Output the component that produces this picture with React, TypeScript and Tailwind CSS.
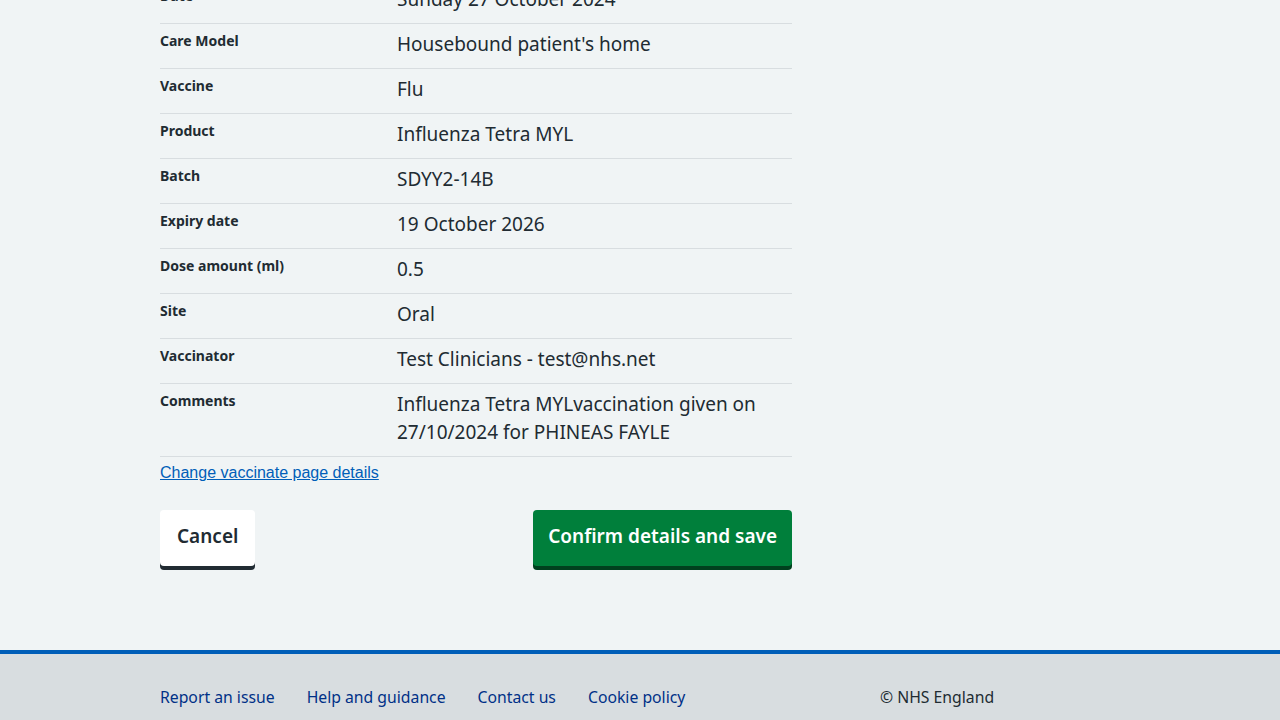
const rows: { label: string; value: string[] }[] = [
  { label: "Date", value: ["Sunday 27 October 2024"] },
  { label: "Care Model", value: ["Housebound patient's home"] },
  { label: "Vaccine", value: ["Flu"] },
  { label: "Product", value: ["Influenza Tetra MYL"] },
  { label: "Batch", value: ["SDYY2-14B"] },
  { label: "Expiry date", value: ["19 October 2026"] },
  { label: "Dose amount (ml)", value: ["0.5"] },
  { label: "Site", value: ["Oral"] },
  { label: "Vaccinator", value: ["Test Clinicians - test@nhs.net"] },
  {
    label: "Comments",
    value: ["Influenza Tetra MYLvaccination given on", "27/10/2024 for PHINEAS FAYLE"],
  },
];

const footerLinks = ["Report an issue", "Help and guidance", "Contact us", "Cookie policy"];

export default function App() {
  return (
    <div className="h-[720px] overflow-hidden bg-[#f0f4f5] text-[#212b32] font-['Noto_Sans',sans-serif]">
      <main className="w-[960px] mx-auto -mt-[21px]">
        <div className="w-[632px]">
          <dl>
            {rows.map((row) => (
              <div key={row.label} className="flex pt-[7px] pb-[9px] border-b border-[#d8dde0]">
                <dt className="w-[237px] shrink-0 text-[14px] leading-5 font-bold">{row.label}</dt>
                <dd className="-mt-px pb-px text-[19px] leading-[28px]">
                  {row.value.map((line) => (
                    <div key={line}>{line}</div>
                  ))}
                </dd>
              </div>
            ))}
          </dl>

          <a
            href="#"
            className="block mt-[6px] text-[16px] leading-[20px] text-[#005eb8] underline font-['Liberation_Sans',Arial,sans-serif]"
          >
            Change vaccinate page details
          </a>

          <div className="flex justify-between mt-[27px]">
            <button className="h-[56px] px-[17px] pb-[3px] bg-white rounded-[4px] text-[19px] font-semibold text-[#212b32] shadow-[0_4px_0_#212b32]">
              Cancel
            </button>
            <button className="h-[56px] px-[15px] pb-[3px] bg-[#007f3b] rounded-[4px] text-[19px] font-semibold text-white shadow-[0_4px_0_#00401e]">
              Confirm details and save
            </button>
          </div>
        </div>
      </main>

      <footer className="mt-[84px] border-t-4 border-[#005eb8] bg-[#d8dde0] h-[200px]">
        <div className="w-[960px] mx-auto pt-[31px] grid grid-cols-[720px_240px] text-[15.75px] leading-6">
          <ul className="flex gap-8">
            {footerLinks.map((l) => (
              <li key={l}>
                <a href="#" className="text-[#003087]">
                  {l}
                </a>
              </li>
            ))}
          </ul>
          <p className="text-[#212b32]">© NHS England</p>
        </div>
      </footer>
    </div>
  );
}
